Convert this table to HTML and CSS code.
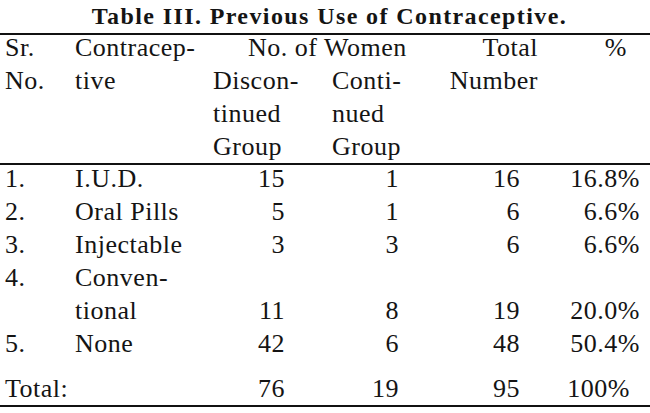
FILE: index.html
```html
<!DOCTYPE html>
<html>
<head>
<meta charset="utf-8">
<title>Table III</title>
<link rel="stylesheet" href="styles.css">
</head>
<body>
<div class="page">
  <h1 class="title">Table III. Previous Use of Contraceptive.</h1>
  <div class="table">
    <div class="head">
      <div class="h-sr">Sr.<br>No.</div>
      <div class="h-con">Contracep-<br>tive</div>
      <div class="h-women">No. of Women</div>
      <div class="h-dis">Discon-<br>tinued<br>Group</div>
      <div class="h-cont">Conti-<br>nued<br>Group</div>
      <div class="h-total">Total<br>Number</div>
      <div class="h-pct">%</div>
    </div>
    <div class="rows">
      <div class="row"><span class="c1">1.</span><span class="c2">I.U.D.</span><span class="c3">15</span><span class="c4">1</span><span class="c5">16</span><span class="c6">16.8%</span></div>
      <div class="row"><span class="c1">2.</span><span class="c2">Oral Pills</span><span class="c3">5</span><span class="c4">1</span><span class="c5">6</span><span class="c6">6.6%</span></div>
      <div class="row"><span class="c1">3.</span><span class="c2">Injectable</span><span class="c3">3</span><span class="c4">3</span><span class="c5">6</span><span class="c6">6.6%</span></div>
      <div class="row"><span class="c1">4.</span><span class="c2">Conven-</span><span class="c3"></span><span class="c4"></span><span class="c5"></span><span class="c6"></span></div>
      <div class="row"><span class="c1"></span><span class="c2">tional</span><span class="c3">11</span><span class="c4">8</span><span class="c5">19</span><span class="c6">20.0%</span></div>
      <div class="row"><span class="c1">5.</span><span class="c2">None</span><span class="c3">42</span><span class="c4">6</span><span class="c5">48</span><span class="c6">50.4%</span></div>
    </div>
    <div class="row total-row"><span class="c1">Total:</span><span class="c2"></span><span class="c3">76</span><span class="c4">19</span><span class="c5">95</span><span class="c6 c6-total">100%</span></div>
  </div>
</div>
</body>
</html>
```

FILE: styles.css
```css
html, body {
  margin: 0;
  padding: 0;
  background: #ffffff;
}

body {
  color: #141414;
  font-family: "Liberation Serif", "Times New Roman", serif;
  width: 650px;
  height: 413px;
  overflow: hidden;
}

.title {
  margin: 0;
  height: 33px;
  padding-left: 9px;
  font-size: 24px;
  line-height: 33px;
  font-weight: bold;
  letter-spacing: 1.4px;
  text-align: center;
  white-space: nowrap;
}

.table {
  border-top: 2px solid #111;
  border-bottom: 2px solid #111;
  font-size: 26px;
  line-height: 33px;
  letter-spacing: 0.5px;
}

.head,
.row {
  display: grid;
  grid-template-columns: 75px 138px 117px 90px 125px 105px;
}

.head {
  grid-template-rows: 33px 99px;
  margin-top: -4px;
  border-bottom: 2px solid #111;
  white-space: nowrap;
}

.h-sr {
  grid-column: 1;
  grid-row: 1 / 3;
  padding-left: 5px;
}

.h-con {
  grid-column: 2;
  grid-row: 1 / 3;
}

.h-women {
  grid-column: 3 / 5;
  grid-row: 1;
  padding-left: 35px;
}

.h-dis {
  grid-column: 3;
  grid-row: 2;
}

.h-cont {
  grid-column: 4;
  grid-row: 2;
  padding-left: 2px;
}

.h-total {
  grid-column: 5;
  grid-row: 1 / 3;
  text-align: right;
  padding-right: 7px;
}

.h-pct {
  grid-column: 6;
  grid-row: 1;
  text-align: right;
  padding-right: 23px;
}

.rows {
  margin-top: -3px;
}

.row {
  height: 33px;
  white-space: nowrap;
}

.c1 {
  padding-left: 5px;
}

.c3,
.c4,
.c5,
.c6 {
  text-align: right;
}

.c3 {
  padding-right: 45px;
}

.c4 {
  padding-right: 21px;
}

.c5 {
  padding-right: 25px;
}

.c6 {
  padding-right: 10px;
}

.c6-total {
  padding-right: 20px;
}

.total-row {
  margin-top: 12px;
}
```
